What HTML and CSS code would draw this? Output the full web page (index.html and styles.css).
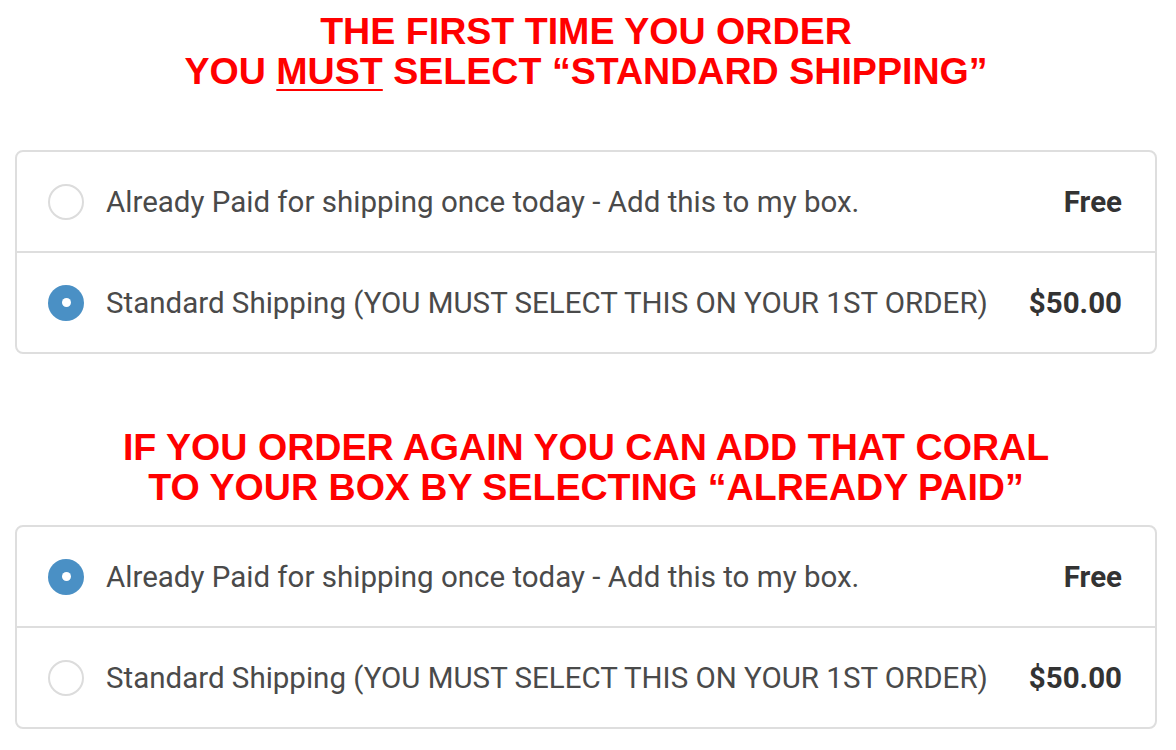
FILE: index.html
```html
<!DOCTYPE html>
<html>
<head>
<meta charset="utf-8">
<link rel="stylesheet" href="styles.css">
</head>
<body>
<div class="page">
  <h2 class="notice notice-first">THE FIRST TIME YOU ORDER<br>YOU <span class="u">MUST</span> SELECT “STANDARD SHIPPING”</h2>
  <div class="options">
    <div class="option">
      <span class="radio"></span>
      <span class="label">Already Paid for shipping once today - Add this to my box.</span>
      <span class="price">Free</span>
    </div>
    <div class="option">
      <span class="radio checked"></span>
      <span class="label">Standard Shipping (YOU MUST SELECT THIS ON YOUR 1ST ORDER)</span>
      <span class="price">$50.00</span>
    </div>
  </div>
  <h2 class="notice notice-second">IF YOU ORDER AGAIN YOU CAN ADD THAT CORAL<br>TO YOUR BOX BY SELECTING “ALREADY PAID”</h2>
  <div class="options">
    <div class="option">
      <span class="radio checked"></span>
      <span class="label">Already Paid for shipping once today - Add this to my box.</span>
      <span class="price">Free</span>
    </div>
    <div class="option">
      <span class="radio"></span>
      <span class="label">Standard Shipping (YOU MUST SELECT THIS ON YOUR 1ST ORDER)</span>
      <span class="price">$50.00</span>
    </div>
  </div>
</div>
</body>
</html>
```
FILE: styles.css
```css
html, body {
  margin: 0;
  padding: 0;
  background: #fff;
}
body {
  font-family: Roboto, "Liberation Sans", Arial, sans-serif;
}
.page {
  width: 1142px;
  padding: 11px 0 0 15px;
}
.notice {
  margin: 0;
  text-align: center;
  color: #f00;
  font-family: "Liberation Sans", Arial, sans-serif;
  font-weight: 700;
  font-size: 37.6px;
  line-height: 40px;
}
.notice-first {
  margin-bottom: 59px;
}
.notice-second {
  margin-top: 73px;
  margin-bottom: 18px;
}
.u {
  text-decoration: underline;
  text-decoration-thickness: 2px;
  text-underline-offset: 5px;
}
.options {
  border: 2px solid #dedede;
  border-radius: 8px;
}
.option {
  display: flex;
  align-items: center;
  height: 99px;
  padding: 0 33px 0 31px;
  font-family: Roboto, "Liberation Sans", Arial, sans-serif;
  font-size: 29.5px;
  color: #4a4a4a;
}
.option + .option {
  border-top: 2px solid #dedede;
}
.radio {
  flex: none;
  box-sizing: border-box;
  width: 36px;
  height: 36px;
  border-radius: 50%;
  border: 2px solid #dcdcdc;
  margin-right: 22px;
  display: flex;
  align-items: center;
  justify-content: center;
}
.radio.checked {
  border: none;
  background: #4a90c5;
}
.radio.checked::after {
  content: "";
  width: 9px;
  height: 9px;
  border-radius: 50%;
  background: #fff;
}
.label {
  flex: 1;
  white-space: nowrap;
}
.price {
  font-weight: 700;
  color: #333;
}
```
